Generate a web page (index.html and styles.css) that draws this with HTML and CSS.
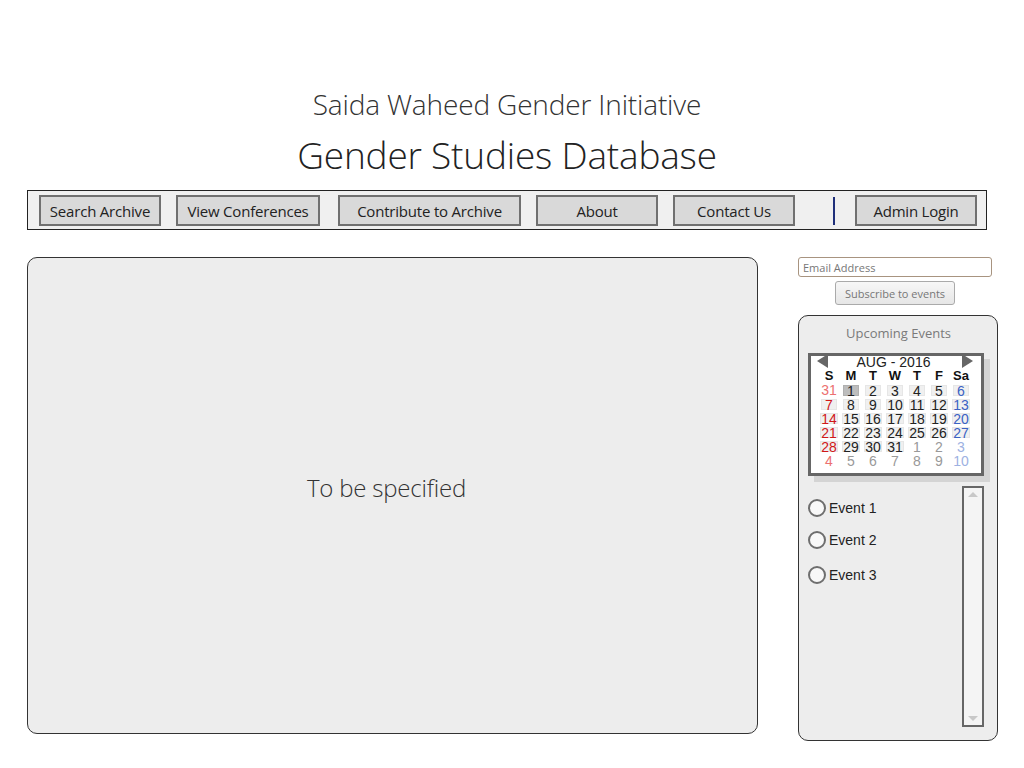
FILE: index.html
```html
<!DOCTYPE html>
<html>
<head>
<meta charset="utf-8">
<title>Gender Studies Database</title>
<link rel="stylesheet" href="styles.css">
</head>
<body>
<div class="page">
  <header class="header">
    <div class="subtitle">Saida Waheed Gender Initiative</div>
    <h1 class="title">Gender Studies Database</h1>
  </header>

  <nav class="nav">
    <button class="nav-btn w-search">Search Archive</button>
    <button class="nav-btn w-conf">View Conferences</button>
    <button class="nav-btn w-contrib">Contribute to Archive</button>
    <button class="nav-btn w-std">About</button>
    <button class="nav-btn w-std">Contact Us</button>
    <span class="nav-divider"></span>
    <button class="nav-btn w-std">Admin Login</button>
  </nav>

  <div class="content">
    <main class="main-panel">
      <span class="placeholder-text">To be specified</span>
    </main>

    <aside class="sidebar">
      <div class="subscribe">
        <input class="email" type="text" placeholder="Email Address">
        <button class="subscribe-btn">Subscribe to events</button>
      </div>

      <section class="events-panel">
        <div class="events-title">Upcoming Events</div>

        <div class="calendar">
          <div class="cal-head">
            <span class="arrow arrow-left"></span>
            <span class="cal-month">AUG - 2016</span>
            <span class="arrow arrow-right"></span>
          </div>
          <div class="cal-grid">
            <span class="dow">S</span><span class="dow">M</span><span class="dow">T</span><span class="dow">W</span><span class="dow">T</span><span class="dow">F</span><span class="dow">Sa</span>

            <span class="d sun other">31</span><span class="d"><i class="sel">1</i></span><span class="d"><i>2</i></span><span class="d"><i>3</i></span><span class="d"><i>4</i></span><span class="d"><i>5</i></span><span class="d sat"><i>6</i></span>

            <span class="d sun"><i>7</i></span><span class="d"><i>8</i></span><span class="d"><i>9</i></span><span class="d"><i>10</i></span><span class="d"><i>11</i></span><span class="d"><i>12</i></span><span class="d sat"><i>13</i></span>

            <span class="d sun"><i>14</i></span><span class="d"><i>15</i></span><span class="d"><i>16</i></span><span class="d"><i>17</i></span><span class="d"><i>18</i></span><span class="d"><i>19</i></span><span class="d sat"><i>20</i></span>

            <span class="d sun"><i>21</i></span><span class="d"><i>22</i></span><span class="d"><i>23</i></span><span class="d"><i>24</i></span><span class="d"><i>25</i></span><span class="d"><i>26</i></span><span class="d sat"><i>27</i></span>

            <span class="d sun"><i>28</i></span><span class="d"><i>29</i></span><span class="d"><i>30</i></span><span class="d"><i>31</i></span><span class="d other">1</span><span class="d other">2</span><span class="d sat other">3</span>

            <span class="d sun other">4</span><span class="d other">5</span><span class="d other">6</span><span class="d other">7</span><span class="d other">8</span><span class="d other">9</span><span class="d sat other">10</span>
          </div>
        </div>

        <div class="event-area">
          <ul class="event-list">
            <li class="event"><span class="radio"></span>Event 1</li>
            <li class="event"><span class="radio"></span>Event 2</li>
            <li class="event e3"><span class="radio"></span>Event 3</li>
          </ul>
          <div class="scrollbar">
            <span class="sb-up"></span>
            <span class="sb-down"></span>
          </div>
        </div>
      </section>
    </aside>
  </div>
</div>
</body>
</html>
```

FILE: styles.css
```css
* { box-sizing: border-box; }

html, body {
  margin: 0;
  padding: 0;
  background: #ffffff;
}

body {
  font-family: "Open Sans", "Noto Sans", sans-serif;
  color: #222;
}

.page {
  width: 1024px;
  padding: 86px 0 0 27px;
}

/* Header */
.header {
  width: 960px;
  text-align: center;
  color: #333;
}

.subtitle {
  font-size: 28px;
  font-weight: 300;
  line-height: 36px;
  letter-spacing: -0.15px;
}

.title {
  margin: 8px 0 0;
  font-size: 37px;
  font-weight: 300;
  line-height: 50px;
  letter-spacing: -0.2px;
  color: #222;
}

/* Navigation */
.nav {
  margin-top: 10px;
  width: 960px;
  height: 40px;
  border: 1px solid #222;
  background: #f0f0f0;
  display: flex;
  align-items: center;
  padding: 1px 9px 0 11px;
  gap: 15px;
}

.nav-btn {
  height: 31px;
  border: 2px solid #707070;
  background: #d9d9d9;
  font-family: "Open Sans", "Noto Sans", sans-serif;
  font-size: 15px;
  color: #222;
  padding: 0;
  letter-spacing: -0.2px;
}

.w-search { width: 122px; }
.w-conf { width: 144px; }
.w-contrib { width: 183px; margin-left: 3px; }
.w-std { width: 122px; }

.nav-divider {
  margin-left: auto;
  margin-right: 5px;
  width: 2px;
  height: 28px;
  background: #1f2f7a;
}

/* Content */
.content {
  display: flex;
  align-items: flex-start;
  margin-top: 27px;
}

.main-panel {
  width: 731px;
  height: 477px;
  border: 1px solid #333;
  border-radius: 10px;
  background: #ededed;
  display: flex;
  align-items: center;
  justify-content: center;
  padding: 0 12px 17px 0;
}

.placeholder-text {
  font-size: 24px;
  font-weight: 300;
  color: #333;
  letter-spacing: -0.2px;
}

/* Sidebar */
.sidebar {
  margin-left: 40px;
  width: 200px;
  display: flex;
  flex-direction: column;
}

.subscribe {
  width: 194px;
  display: flex;
  flex-direction: column;
  align-items: center;
}

.email {
  width: 194px;
  height: 20px;
  border: 1px solid #a89480;
  border-radius: 3px;
  padding: 0 4px;
  font-family: "Open Sans", "Noto Sans", sans-serif;
  font-size: 11px;
  outline: none;
}

.email::placeholder { color: #777; }

.subscribe-btn {
  margin-top: 4px;
  width: 120px;
  height: 24px;
  border: 1px solid #aaa;
  border-radius: 3px;
  background: linear-gradient(#f7f7f7, #e6e6e6);
  font-family: "Open Sans", "Noto Sans", sans-serif;
  font-size: 11px;
  color: #777;
  padding: 0;
}

.events-panel {
  margin-top: 10px;
  width: 200px;
  height: 426px;
  border: 1px solid #333;
  border-radius: 10px;
  background: #ededed;
  padding: 8px 13px 0 9px;
}

.events-title {
  text-align: center;
  font-size: 13px;
  color: #7a7a7a;
  line-height: 19px;
  padding-left: 5px;
}

/* Calendar */
.calendar {
  margin-top: 10px;
  width: 176px;
  height: 123px;
  border: 3px solid #666;
  background: #fff;
  box-shadow: 6px 6px 0 #d4d4d4;
  font-family: "Liberation Sans", Arial, sans-serif;
  padding: 0 12px 0 7px;
}

.cal-head {
  position: relative;
  height: 12px;
  text-align: center;
  font-size: 14px;
  line-height: 12px;
  color: #222;
}

.arrow {
  position: absolute;
  top: -2px;
  width: 0;
  height: 0;
  border-top: 7px solid transparent;
  border-bottom: 7px solid transparent;
}

.arrow-left {
  left: -1px;
  border-right: 11px solid #666;
}

.arrow-right {
  right: -4px;
  border-left: 11px solid #666;
}

.cal-grid {
  display: grid;
  grid-template-columns: repeat(7, 22px);
  grid-template-rows: 14px;
  grid-auto-rows: 14.2px;
  margin-top: 1px;
}

.dow {
  font-weight: bold;
  font-size: 13px;
  text-align: center;
  line-height: 14px;
  color: #111;
}

.d {
  font-size: 14px;
  line-height: 14px;
  text-align: center;
  color: #222;
  display: flex;
  justify-content: center;
  align-items: center;
}

.d i {
  font-style: normal;
  display: inline-block;
  min-width: 16px;
  height: 11px;
  line-height: 11px;
  background: #f0f0f0;
  border: 1px solid #e6e6e6;
  text-align: center;
}

.d i.sel {
  background: #bdbdbd;
  border-color: #b0b0b0;
}

.d.sun { color: #d01818; }
.d.sat { color: #3a62c4; }
.d.other { color: #999; }
.d.sun.other { color: #ec7070; }
.d.sat.other { color: #9db1e2; }

/* Event list */
.event-area {
  margin-top: 10px;
  display: flex;
  justify-content: space-between;
}

.event-list {
  list-style: none;
  margin: 0;
  padding: 0;
  font-family: "Liberation Sans", Arial, sans-serif;
  font-size: 14px;
  color: #222;
}

.event {
  display: flex;
  align-items: center;
  height: 18px;
  margin-top: 13px;
  margin-bottom: 14px;
}

.event + .event { margin-top: 0; }
.event.e3 { margin-top: 17px; }

.radio {
  width: 18px;
  height: 18px;
  border: 2px solid #6e6e6e;
  border-radius: 50%;
  background: #f8f8f8;
  margin-right: 3px;
}

.scrollbar {
  position: relative;
  width: 22px;
  height: 241px;
  border: 2px solid #666;
  background: #f4f4f4;
}

.sb-up, .sb-down {
  position: absolute;
  left: 4px;
  width: 0;
  height: 0;
  border-left: 5px solid transparent;
  border-right: 5px solid transparent;
}

.sb-up {
  top: 4px;
  border-bottom: 5px solid #c8c8c8;
}

.sb-down {
  bottom: 4px;
  border-top: 5px solid #c8c8c8;
}
```
